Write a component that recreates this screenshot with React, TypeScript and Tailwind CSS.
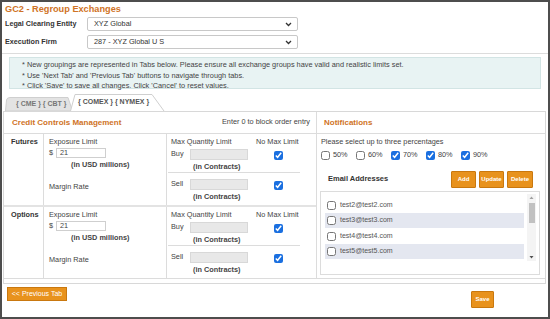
import React from "react";

const orange = "text-[#cf7326]";

function Select({ value }: { value: string }) {
  return (
    <div className="flex items-center justify-between w-[211px] h-[14px] border border-[#c8c8c8] rounded-[2px] bg-white pl-[6px] pr-[5px]">
      <span className="text-[7.3px] text-[#333]">{value}</span>
      <svg width="7" height="5" viewBox="0 0 7 5">
        <polyline points="1,1 3.5,3.5 6,1" fill="none" stroke="#333" strokeWidth="1.3" />
      </svg>
    </div>
  );
}

function Check({ checked = false }: { checked?: boolean }) {
  return (
    <input
      type="checkbox"
      checked={checked}
      readOnly
      className="m-0 w-[9px] h-[9px] accent-[#1a6fe0]"
    />
  );
}

function OrangeButton({ label, w, h }: { label: string; w: string; h: string }) {
  return (
    <button
      className={`${w} ${h} flex items-center justify-center bg-[#e8921d] border border-[#c9780f] text-white font-bold text-[6px] rounded-[1px]`}
    >
      {label}
    </button>
  );
}

function QtyBlock({ label, bordered }: { label: string; bordered?: boolean }) {
  return (
    <div className={`flex h-[27px] w-[132px] ${bordered ? "border-b border-[#dcdcdc]" : ""}`}>
      <div className="w-[90px] pl-[3px] pt-[3px]">
        <div className="flex items-center gap-[5px]">
          <span className="w-[14px] text-[7.3px] text-[#444]">{label}</span>
          <div className="w-[58px] h-[11px] bg-[#e8e8e8] border border-[#d8d8d8]" />
        </div>
        <div className="pl-[22px] mt-[2px] text-[7.3px] font-bold text-[#444]">(in Contracts)</div>
      </div>
      <div className="flex-1 flex justify-start pt-[5px] pl-[16px]">
        <Check checked />
      </div>
    </div>
  );
}

function ProductRow({ name, h, last }: { name: string; h: string; last?: boolean }) {
  return (
    <div className={`flex ${h} ${last ? "" : "border-b-2 border-[#e3e3e3]"}`}>
      <div className="w-[40px] border-r border-[#dcdcdc] pl-[7px] pt-[3px] text-[7.3px] font-bold text-[#333]">
        {name}
      </div>
      <div className="w-[123px] border-r border-[#dcdcdc] pl-[5px] pt-[3px] text-[#444]">
        <div className="text-[7.3px] leading-[9px]">Exposure Limit</div>
        <div className="flex items-center gap-[3px] mt-[2px]">
          <span className="text-[7.3px]">$</span>
          <div className="w-[50px] h-[10px] border border-[#cfcfcf] pl-[3px] text-[7.3px] leading-[8px]">21</div>
        </div>
        <div className="pl-[22px] mt-[1px] text-[7.3px] font-bold">(in USD millions)</div>
        <div className="mt-[11px] text-[7.3px]">Margin Rate</div>
      </div>
      <div className="flex-1 pl-[1px] pt-[3px]">
        <div className="flex text-[7.3px] leading-[9px] text-[#444]">
          <span className="w-[88px] pl-[3px]">Max Quantity Limit</span>
          <span>No Max Limit</span>
        </div>
        <QtyBlock label="Buy" bordered />
        <div className="pt-[3px]">
          <QtyBlock label="Sell" />
        </div>
      </div>
    </div>
  );
}

function Tabs() {
  return (
    <div className="flex items-end h-[17px] pl-[3px]">
      <div className="relative w-[68px] h-[14px] flex items-center pl-[11px]">
        <svg className="absolute inset-0" width="68" height="14" viewBox="0 0 68 14">
          <path d="M0.5,14 L1.5,3 Q2,0.5 5,0.5 L63,0.5 L67.5,14 Z" fill="#e3e3e3" stroke="#cfcfcf" />
        </svg>
        <span className="relative text-[7px] font-bold text-[#777]">{"{ CME } { CBT }"}</span>
      </div>
      <div className="relative -ml-[3px] w-[95px] h-[17px] flex items-center pl-[8px]">
        <svg className="absolute inset-0" width="95" height="17" viewBox="0 0 95 17">
          <path d="M0.5,17 L5,0.5 L82,0.5 L94,17" fill="#fff" stroke="#cfcfcf" />
        </svg>
        <span className="relative text-[7px] font-bold text-[#555]">{"{ COMEX } { NYMEX }"}</span>
      </div>
    </div>
  );
}

const emails = ["test2@test2.com", "test3@test3.com", "test4@test4.com", "test5@test5.com"];

export default function App() {
  return (
    <div className="w-[550px] h-[319px] border-2 border-[#4d4d4d] bg-white font-['Liberation_Sans',Arial,sans-serif] overflow-hidden">
      <div className={`pl-[3px] pt-[1px] h-[13px] text-[9.2px] font-bold ${orange}`}>GC2 - Regroup Exchanges</div>

      <div className="flex flex-col gap-[4px] pl-[3px] mt-[2px]">
        <div className="flex items-center">
          <span className="w-[82px] text-[7.2px] font-bold text-[#333]">Legal Clearing Entity</span>
          <Select value="XYZ Global" />
        </div>
        <div className="flex items-center">
          <span className="w-[82px] text-[7.2px] font-bold text-[#333]">Execution Firm</span>
          <Select value="287 - XYZ Global U S" />
        </div>
      </div>

      <div className="mt-[4px] h-[1px] bg-[#dcdcdc]" />

      <div className="mx-[7px] mt-[3px] h-[32px] bg-[#e8f3f3] border border-[#d2e4e4] pl-[12px] pt-[2px] text-[7.35px] leading-[10.5px] text-[#444]">
        <div>* New groupings are represented in Tabs below. Please ensure all exchange groups have valid and realistic limits set.</div>
        <div>* Use 'Next Tab' and 'Previous Tab' buttons to navigate through tabs.</div>
        <div>* Click 'Save' to save all changes. Click 'Cancel' to reset values.</div>
      </div>

      <div className="mt-[5px]">
        <Tabs />
      </div>

      <div className="ml-[1px] mr-[2px] border border-[#d8d8d8] pb-[4px]">
        <div className="flex">
          <div className="w-[313px] border-r border-b border-[#dcdcdc]">
            <div className="flex items-center justify-between h-[22px] border-b border-[#dcdcdc] pl-[8px] pr-[6px]">
              <span className={`text-[8px] font-bold ${orange}`}>Credit Controls Management</span>
              <span className="text-[7.3px] text-[#444]">Enter 0 to block order entry</span>
            </div>
            <ProductRow name="Futures" h="h-[73px]" />
            <ProductRow name="Options" h="h-[71px]" last />
          </div>

          <div className="flex-1 border-b border-[#dcdcdc] pb-[1px]">
            <div className="flex items-center h-[22px] border-b border-[#dcdcdc] pl-[7px]">
              <span className={`text-[8px] font-bold ${orange}`}>Notifications</span>
            </div>
            <div className="pl-[4px] pt-[3px] text-[7.3px] text-[#444] leading-[9px]">Please select up to three percentages</div>
            <div className="flex items-center gap-[7px] pl-[4px] mt-[4px]">
              {[
                ["50%", false],
                ["60%", false],
                ["70%", true],
                ["80%", true],
                ["90%", true],
              ].map(([p, c]) => (
                <label key={p as string} className="flex items-center gap-[3px] text-[7.3px] text-[#444]">
                  <Check checked={c as boolean} />
                  <span className="w-[16px]">{p as string}</span>
                </label>
              ))}
            </div>
            <div className="flex items-end justify-between pl-[11px] pr-[12px] mt-[10px]">
              <span className="text-[7.5px] font-bold text-[#333] mb-[4px]">Email Addresses</span>
              <div className="flex gap-[3px]">
                <OrangeButton label="Add" w="w-[25px]" h="h-[17px]" />
                <OrangeButton label="Update" w="w-[25px]" h="h-[17px]" />
                <OrangeButton label="Delete" w="w-[26px]" h="h-[17px]" />
              </div>
            </div>
            <div className="ml-[3px] mr-[5px] mt-[3px] h-[84px] border border-[#dcdcdc] pl-[4px] pr-[3px] pt-[2px]">
              <div className="flex h-[67px]">
                <div className="flex-1 flex flex-col gap-[1px] pt-[4px]">
                  {emails.map((e, i) => (
                    <div
                      key={e}
                      className={`flex items-center gap-[4px] h-[14.5px] pl-[2px] ${i % 2 === 1 ? "bg-[#e4e7f0]" : ""}`}
                    >
                      <Check />
                      <span className="text-[7px] text-[#555]">{e}</span>
                    </div>
                  ))}
                </div>
                <div className="w-[9px] ml-[3px] flex flex-col items-center bg-[#f4f4f4]">
                  <svg width="9" height="7" viewBox="0 0 9 7">
                    <polygon points="2.5,5 4.5,2.5 6.5,5" fill="#a0a0a0" />
                  </svg>
                  <div className="w-[6px] h-[20px] bg-[#c1c1c1] mt-[2px]" />
                  <div className="flex-1" />
                  <svg width="9" height="7" viewBox="0 0 9 7">
                    <polygon points="2.5,2 4.5,4.5 6.5,2" fill="#505050" />
                  </svg>
                </div>
              </div>
            </div>
          </div>
        </div>
      </div>

      <div className="flex items-start">
        <div className="ml-[5px] mt-[3px]">
          <button className="w-[60px] h-[14px] flex items-center justify-center bg-[#e8921d] border border-[#c9780f] text-white text-[7px]">
            {"<< Previous Tab"}
          </button>
        </div>
        <div className="ml-auto mr-[54px] mt-[7px]">
          <OrangeButton label="Save" w="w-[23px]" h="h-[17px]" />
        </div>
      </div>
    </div>
  );
}
